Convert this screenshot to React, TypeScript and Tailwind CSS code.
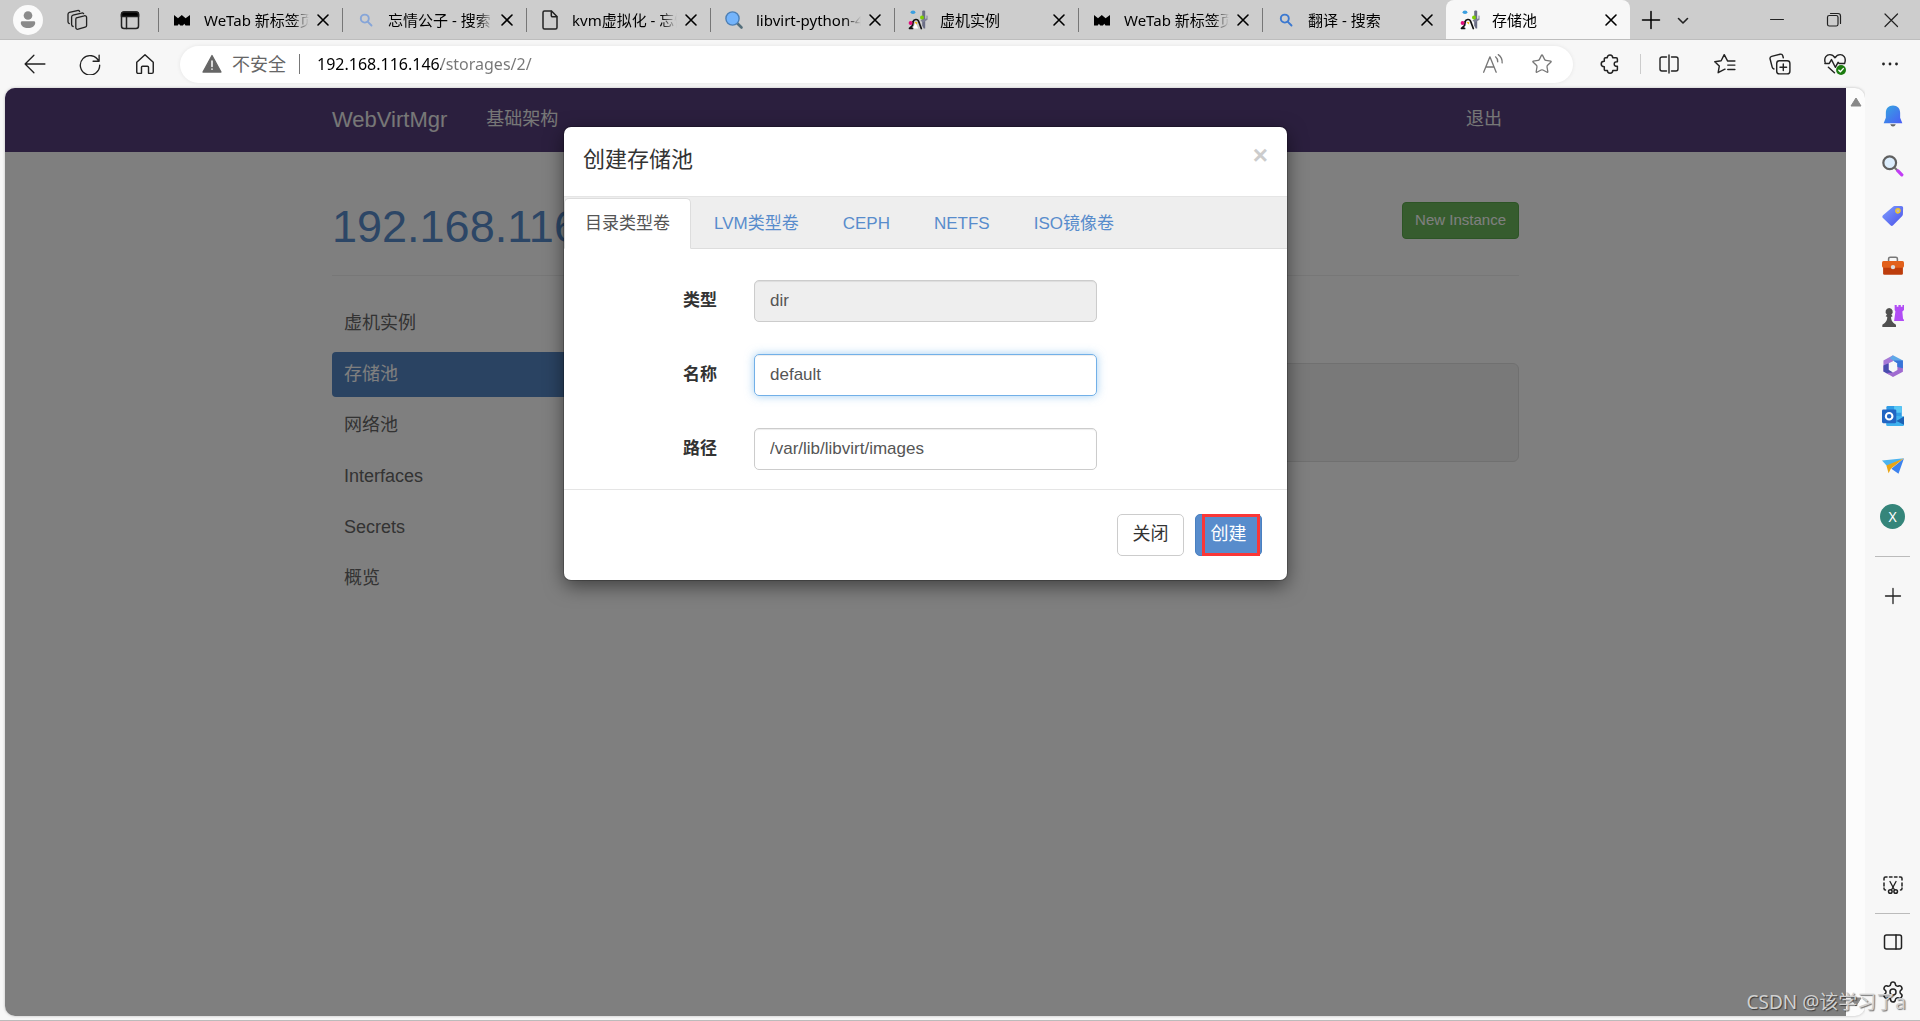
import { useState, type ReactNode } from "react";
import { Settings, Star } from "lucide-react";
import { clsx } from "clsx";

type Favicon = "wetab" | "search" | "searchFaded" | "file" | "glass" | "virt";

const tabs: { icon: Favicon; title: string }[] = [
  { icon: "wetab", title: "WeTab 新标签页" },
  { icon: "searchFaded", title: "忘情公子 - 搜索" },
  { icon: "file", title: "kvm虚拟化 - 忘情" },
  { icon: "glass", title: "libvirt-python-4" },
  { icon: "virt", title: "虚机实例" },
  { icon: "wetab", title: "WeTab 新标签页" },
  { icon: "search", title: "翻译 - 搜索" },
  { icon: "virt", title: "存储池" },
];

const menu = ["虚机实例", "存储池", "网络池", "Interfaces", "Secrets", "概览"];
const poolTypes = ["目录类型卷", "LVM类型卷", "CEPH", "NETFS", "ISO镜像卷"];

function Icon({ size = 20, width = 1.3, className, children }: { size?: number; width?: number; className?: string; children: ReactNode }) {
  return (
    <svg
      width={size}
      height={size}
      viewBox="0 0 20 20"
      fill="none"
      stroke="currentColor"
      strokeWidth={width}
      strokeLinecap="round"
      strokeLinejoin="round"
      className={clsx("shrink-0", className)}
      aria-hidden="true"
    >
      {children}
    </svg>
  );
}

function TabIcon({ name }: { name: Favicon }) {
  switch (name) {
    case "wetab":
      return (
        <Icon>
          <path d="M2 5l4 3.2L9.800 5l3.800 3.200L18 5v10.500h-4.500l-1.200-1.800-1.400 1.800H8.200l-1.300-1.800-1.200 1.800H2z" fill="#000" stroke="none" />
        </Icon>
      );
    case "search":
    case "searchFaded":
      return (
        <Icon width={1.9} className={name === "search" ? "text-[#3b78d0]" : "text-[#86a5d8]"}>
          <circle cx="8.8" cy="8.6" r="4" />
          <path d="M11.9 11.8l3.6 3.7" />
        </Icon>
      );
    case "file":
      return (
        <Icon width={1.5} className="text-[#222]">
          <path d="M4.5 1h7L17 6.500v11a1.500 1.500 0 0 1-1.500 1.500h-11A1.500 1.500 0 0 1 3 17.500v-15A1.500 1.500 0 0 1 4.500 1z" />
          <path d="M11.300 1.200V5.500a1.200 1.200 0 0 0 1.200 1.200h4.200" />
        </Icon>
      );
    case "glass":
      return (
        <Icon>
          <path d="M13.500 13.500l4 4" stroke="#546e7a" strokeWidth="2.600" />
          <circle cx="8.500" cy="8.500" r="6.600" fill="#74b4fb" stroke="#4c7fb5" strokeWidth="1.400" />
        </Icon>
      );
    case "virt":
      return (
        <Icon>
          <path d="M14.200 1.500c0-1.300 3-1.300 3 0v17h-1.500l-1.500-3z" fill="#6b6e85" stroke="none" />
          <path d="M12.500 10l6-1.500V5.500l1 .3v4l-5 3z" fill="#7d8097" stroke="none" />
          <ellipse cx="5" cy="2.200" rx="2.400" ry="1.700" fill="#3b9fe0" stroke="none" />
          <path d="M5.200 11.500c.7-2.300 4.300-2.800 5.300-.5l2.800 7.500" stroke="#111" strokeWidth="1.700" />
          <path d="M5.200 11.500l-.7 4-3 2.800h3.500" stroke="#111" strokeWidth="1.700" />
          <path d="M7.500 12.500l2.700 6H4.800z" fill="#fff" stroke="none" />
          <circle cx="14" cy="7.400" r="2" fill="#7fd000" stroke="none" />
          <circle cx="2.600" cy="13" r="2" fill="#e0107c" stroke="none" />
          <path d="M6.500 12l3 .2-1 2.300z" fill="#f5b800" stroke="none" />
        </Icon>
      );
  }
}

function BrowserTab({ icon, title, active }: { icon: Favicon; title: string; active: boolean }) {
  return (
    <div className={clsx("relative flex w-[184px] min-w-0 items-center", active && "rounded-t-lg bg-[#f7f7f7]")}>
      {!active && <span className="absolute top-2 left-0 h-6 w-px bg-[#777]" />}
      <button role="tab" aria-selected={active} className="flex h-full w-[151px] min-w-0 items-center gap-3 pl-[14px] text-left">
        <TabIcon name={icon} />
        <span className="min-w-0 flex-1 overflow-hidden whitespace-nowrap mask-r-from-85% text-[15px] leading-6 text-black">
          {title}
        </span>
      </button>
      <button aria-label="关闭标签页" className="ml-1">
        <Icon width={1.6} className="text-black">
          <path d="M5 5l10 10M15 5L5 15" />
        </Icon>
      </button>
    </div>
  );
}

function TabBar() {
  return (
    <header className="flex h-10 shrink-0 border-b border-[#bdbdbd] bg-[#cdcdcd]">
      <div className="flex w-[158px] shrink-0 items-center pl-[13px]">
        <button aria-label="个人资料" className="flex h-[30px] w-[30px] items-center justify-center rounded-full bg-[#fafafa]">
          <Icon size={18} className="text-[#8b8b8b]">
            <circle cx="10" cy="5" r="4.800" fill="currentColor" stroke="none" />
            <path d="M3.500 11.500h13a1.500 1.500 0 0 1 1.500 1.500c0 3.500-3.500 6-8 6s-8-2.500-8-6a1.500 1.500 0 0 1 1.500-1.500z" fill="currentColor" stroke="none" />
          </Icon>
        </button>
        <button aria-label="工作区" className="ml-[22px]">
          <Icon size={24} width={1.1} className="text-[#222]">
            <path d="M9.500 8.200l6.500-1.700a1.500 1.500 0 0 1 2 1.400v6.600c0 .7-.5 1.300-1.200 1.500l-5.800 1.700a1.500 1.500 0 0 1-2-1.400V9.800c0-.8 0-1.400.5-1.600z" />
            <path d="M6.800 15.400a1.600 1.600 0 0 1-1.300-1.600V7.600c0-.8.4-1.400 1.200-1.600l7-1.800c.7-.2 1.400 0 1.800.5" />
            <path d="M3.600 13a1.600 1.600 0 0 1-1.100-1.500V5.300c0-.8.4-1.400 1.200-1.600l6.500-1.600c.9-.2 1.700.1 2 .8" />
          </Icon>
        </button>
        <button aria-label="标签操作菜单" className="ml-[31px]">
          <Icon width={1.500} className="text-[#222]">
            <rect x="1.500" y="2" width="17" height="16.500" rx="2.500" />
            <path d="M1.500 6.500V4.500A2.500 2.500 0 0 1 4 2h12a2.500 2.500 0 0 1 2.500 2.500v2z" fill="#000" />
            <path d="M6.500 6.500v12" />
          </Icon>
        </button>
      </div>
      <div role="tablist" className="flex min-w-0">
        {tabs.map((tab, i) => (
          <BrowserTab key={i} icon={tab.icon} title={tab.title} active={i === tabs.length - 1} />
        ))}
      </div>
      <div className="flex flex-1 items-center">
        <button aria-label="新建标签页" className="ml-[11px]">
          <Icon width={1.500} className="text-black">
            <path d="M10 1.500v17M1.500 10h17" />
          </Icon>
        </button>
        <button aria-label="搜索标签页" className="ml-3">
          <Icon width={1.600} className="text-[#222]">
            <path d="M5.500 8.500l4.500 4.500 4.500-4.500" />
          </Icon>
        </button>
      </div>
      <div className="flex items-center gap-[37px] pr-[19px] text-[#222]">
        <button aria-label="最小化">
          <Icon width={1.200}>
            <path d="M3.500 9.500h13" strokeWidth="1" />
          </Icon>
        </button>
        <button aria-label="还原">
          <Icon width={1.200}>
            <rect x="3.500" y="5.500" width="10.500" height="10.500" rx="1.800" />
            <path d="M6.500 3.500h7.500a2.500 2.500 0 0 1 2.500 2.500v7.500" />
          </Icon>
        </button>
        <button aria-label="关闭">
          <Icon width={1.200}>
            <path d="M4 4l12.500 12.500M16.500 4L4 16.500" />
          </Icon>
        </button>
      </div>
    </header>
  );
}

function Toolbar() {
  return (
    <div className="flex h-12 shrink-0 items-center bg-[#f7f7f7] text-[#222]">
      <div className="flex w-[180px] shrink-0 items-center gap-[33px] pl-6">
        <button aria-label="后退">
          <Icon size={22} width={1.200}>
            <path d="M1 10h18M9 2L1 10l8 8" />
          </Icon>
        </button>
        <button aria-label="刷新">
          <Icon size={22} width={1.200}>
            <path d="M18 7.500A8.800 8.800 0 1 0 18.800 11M18.300 2v5.500h-5.500" />
          </Icon>
        </button>
        <button aria-label="主页">
          <Icon size={22} width={1.300}>
            <path d="M2.500 8.500L10 1.500l7.500 7v8.800c0 .7-.5 1.200-1.200 1.200h-3.100V13a1 1 0 0 0-1-1H7.800a1 1 0 0 0-1 1v5.500H3.700c-.7 0-1.200-.5-1.200-1.200z" />
          </Icon>
        </button>
      </div>
      <form className="flex h-[37px] min-w-0 flex-1 items-center rounded-full bg-white pr-5 pl-[22px] shadow-[0_0_4px_rgba(0,0,0,0.08)]">
        <Icon className="text-[#666]">
          <path d="M10 1.500L19 18H1z" fill="currentColor" />
          <path d="M10 7v5.500M10 15v.3" stroke="#fff" strokeWidth="1.500" />
        </Icon>
        <span className="ml-[10px] text-lg text-[#666]">不安全</span>
        <span className="mr-[17px] ml-[13px] h-5 w-px bg-[#777]" />
        <label htmlFor="address" className="sr-only">地址</label>
        <input
          id="address"
          defaultValue="192.168.116.146/storages/2/"
          className="min-w-0 flex-1 bg-[linear-gradient(90deg,#000_124px,#767676_124px)] bg-clip-text text-base text-transparent outline-none"
        />
        <button type="button" aria-label="朗读此页内容" className="mr-[27px] text-[#777]">
          <Icon size={22} width={1.200}>
            <path d="M1.500 17.500L7.200 3.500l5.700 14M3.500 12.700h7.400M12.300 3.500c1.500 1.200 2 2.600 2 4.500M14.800 1.500c2.600 1.900 3.700 4.500 3.500 7.500" />
          </Icon>
        </button>
        <button type="button" aria-label="收藏" className="text-[#777]">
          <Star size={22} strokeWidth={1.400} />
        </button>
      </form>
      <div className="flex w-[347px] shrink-0 items-center pl-[27px]">
        <button aria-label="扩展">
          <Icon width={1.500}>
            <path d="M5.500 3.800h1.800C7.300 2.200 8.300 1 10 1s2.700 1.200 2.700 2.800h3.500a1.200 1.200 0 0 1 1.200 1.200v2.700c-1.900-.2-3.200.7-3.200 2.300s1.300 2.500 3.200 2.300v3.100a1.200 1.200 0 0 1-1.200 1.200h-3.400c0 1.500-1 2.600-2.700 2.600s-2.700-1.100-2.700-2.600H5.500a1.200 1.200 0 0 1-1.200-1.200v-2.700C2.500 12.700 1.200 11.700 1.200 10s1.300-2.700 3.100-2.700V5a1.200 1.200 0 0 1 1.200-1.200z" />
          </Icon>
        </button>
        <span className="ml-5 h-5 w-px bg-[#ccc]" />
        <button aria-label="拆分屏幕" className="ml-[18px]">
          <Icon width={1.400}>
            <path d="M10 1v18M7.500 3H3a2 2 0 0 0-2 2v10a2 2 0 0 0 2 2h4.500M12.500 3H17a2 2 0 0 1 2 2v10a2 2 0 0 1-2 2h-4.500" />
          </Icon>
        </button>
        <button aria-label="收藏夹" className="ml-[35px]">
          <Icon size={22} width={1.300}>
            <path d="M12.300 7.200L9.300 1.500 6.500 7l-5.800.9 4.100 4-1 6 5.200-2.700 1-.5M12.300 7.200H19M12.500 11H19M12.500 15H19" />
          </Icon>
        </button>
        <button aria-label="集锦" className="ml-[33px]">
          <Icon size={22} width={1.300}>
            <rect x="7" y="7" width="12" height="12" rx="2.500" />
            <path d="M13 10v6M10 13h6M4.500 14.500a2 2 0 0 1-1.600-1.600L1 5.500a2 2 0 0 1 1.400-2.400l7.700-2a2 2 0 0 1 2.400 1.400l.5 1.800" />
          </Icon>
        </button>
        <button aria-label="浏览器概要" className="ml-[33px]">
          <Icon size={22} width={1.300}>
            <path d="M1 8.500C-.2 4 2.500 1.500 5.300 1.500c2 0 3.500 1 4.700 2.800 1.200-1.800 2.700-2.800 4.700-2.800C17.500 1.500 20.200 4 19 8.500M.8 9.500h4l2-3.500 3.500 7 2.500-4.500 1 1h5M4 13l5.500 5" />
            <circle cx="15.500" cy="15.500" r="4.500" fill="#1c7c10" stroke="none" />
            <path d="M13.500 15.600l1.400 1.400 2.600-2.800" stroke="#fff" />
          </Icon>
        </button>
        <button aria-label="设置及其他" className="ml-[34px]">
          <Icon>
            <path d="M3.500 10h.01M10 10h.01M16.500 10h.01" strokeWidth="2.800" />
          </Icon>
        </button>
      </div>
    </div>
  );
}

const sidebarApps: { label: string; drawing: ReactNode }[] = [
  {
    label: "通知",
    drawing: (
      <>
        <path d="M7.500 17.500h5l-.8 1.300c-.6 1-2.800 1-3.400 0z" fill="#666" stroke="none" />
        <path d="M10 .5c-4 0-6.500 2.700-6.500 6.500v4.500L1.500 16.500h17l-2-5V7C16.500 3.200 14 .5 10 .5z" fill="url(#bell)" stroke="none" />
      </>
    ),
  },
  {
    label: "搜索",
    drawing: (
      <>
        <path d="M12 12l2.500 2.500" stroke="#777" strokeWidth="2" />
        <path d="M14.500 14.500l3.500 3.500" stroke="#c23df5" strokeWidth="3" />
        <circle cx="7" cy="7" r="5.800" fill="#dcedfc" stroke="#606060" strokeWidth="2" />
      </>
    ),
  },
  {
    label: "购物",
    drawing: (
      <>
        <path d="M11.500 1l6-.2c1 0 1.700.7 1.700 1.700l-.2 6c0 .6-.2 1-.6 1.400l-8.300 8.600a1.700 1.700 0 0 1-2.400 0L.9 11.800a1.700 1.700 0 0 1 0-2.400L10 1.600c.4-.4.9-.6 1.500-.6z" fill="url(#tag)" stroke="none" />
        <circle cx="14.500" cy="5.300" r="1.900" fill="#b9b8c8" stroke="#f3c526" strokeWidth="1.300" />
      </>
    ),
  },
  {
    label: "工具",
    drawing: (
      <>
        <path d="M6 6V3.500C6 2.500 6.600 2 7.500 2h5c.9 0 1.500.5 1.500 1.500V6" stroke="#777" strokeWidth="1.400" />
        <rect x="1" y="10" width="18" height="8" rx="1.200" fill="#bd3d0c" stroke="none" />
        <rect x="0" y="5.500" width="20" height="6" rx="1.400" fill="#e2611c" stroke="none" />
        <circle cx="10" cy="11" r="2" fill="#ddd" stroke="none" />
      </>
    ),
  },
  {
    label: "游戏",
    drawing: (
      <>
        <path d="M11.500 0h1.900v1.500h1.500V0h2.200v1.500h1.500V0H20v4.500l-1.500 1.300.6 6.700c.5.300.9.800.9 2h-9l1.200-8.700-.7-1.300z" fill="#b14cf5" stroke="none" />
        <path d="M6.500 2.800a3.300 3.300 0 0 1 2 5.900l1.200 1.500-1.500.6c0 2.400.9 4.200 2.300 5.500l2.200 1.700v2H.3v-2l2.200-1.700c1.400-1.300 2.300-3.100 2.300-5.500l-1.500-.6 1.200-1.500a3.300 3.300 0 0 1 2-5.900z" fill="#505050" stroke="none" />
      </>
    ),
  },
  {
    label: "Microsoft 365",
    drawing: (
      <>
        <path d="M10 .3L1.300 5v10L6 17.500V7.500L10 5.600z" fill="#a778d6" stroke="none" />
        <path d="M10 .3L19 5v7.500l-5-3v-2L6.800 3z" fill="#5fa8e8" stroke="none" />
        <path d="M6 7.500v6L10 16l-4 1.500L1.300 15V9.500z" fill="#4a4dae" stroke="none" />
        <path d="M19 9v6.300l-9 4.700-6.200-3.600 6.200-.4 4-2.400V8z" fill="#a06bd0" stroke="none" />
        <path d="M19 5v7l-5-1V7.500L10 5z" fill="#3874d8" stroke="none" />
        <circle cx="10" cy="10.300" r="3.300" fill="#f7f7f7" stroke="none" />
      </>
    ),
  },
  {
    label: "Outlook",
    drawing: (
      <>
        <path d="M5 1h12a1 1 0 0 1 1 1v9H4V2a1 1 0 0 1 1-1z" fill="#2f9ce6" stroke="none" />
        <path d="M11 1h7v6h-7z" fill="#58c8f5" stroke="none" />
        <path d="M4 9l16 1.500V18a1.200 1.200 0 0 1-1.200 1.200H5A1.200 1.200 0 0 1 3.800 18z" fill="#3fb1ee" stroke="none" />
        <path d="M20 10.500V18l-7-3.500z" fill="#1d62b5" stroke="none" />
        <rect x="0" y="4" width="13" height="12.500" rx="1.200" fill="#2265c3" stroke="none" />
        <circle cx="6.500" cy="10.200" r="3" stroke="#fff" strokeWidth="1.900" />
      </>
    ),
  },
  {
    label: "Drop",
    drawing: (
      <>
        <path d="M0 5L20 3 5 10.500z" fill="#4cb4f0" stroke="none" />
        <path d="M20 3l-5 14-6.500-4.500z" fill="#3c82ee" stroke="none" />
        <path d="M4 9.500L20 3 8 12.500 6 16.500z" fill="#e9a516" stroke="none" />
      </>
    ),
  },
];

function Sidebar() {
  return (
    <aside className="flex w-[55px] shrink-0 flex-col items-center bg-[#f7f7f7] pt-[3px] text-[#222]">
      <svg width="0" height="0" className="absolute" aria-hidden="true">
        <linearGradient id="bell" x1="0" y1="0" x2="1" y2="1">
          <stop stopColor="#35a8e0" />
          <stop offset="1" stopColor="#4a5cf5" />
        </linearGradient>
        <linearGradient id="tag" x1="0" y1="0" x2="1" y2="1">
          <stop stopColor="#7fa0ff" />
          <stop offset="1" stopColor="#4a50e8" />
        </linearGradient>
      </svg>
      {sidebarApps.map(app => (
        <button key={app.label} aria-label={app.label} className="flex h-[50px] w-full items-center justify-center">
          <Icon size={22}>{app.drawing}</Icon>
        </button>
      ))}
      <button className="flex h-[50px] w-full items-center justify-center">
        <span className="h-[25px] w-[25px] rounded-full bg-[#35857a] text-center text-sm leading-[25px] text-white">X</span>
      </button>
      <span className="mt-[15px] h-px w-[35px] bg-[#bbb]" />
      <button aria-label="自定义" className="mt-[14px] flex h-[50px] w-full items-center justify-center">
        <Icon width={1.300}>
          <path d="M10 2.500v15M2.500 10h15" />
        </Icon>
      </button>
      <div className="mt-auto flex w-full flex-col items-center pb-[3px]">
        <button aria-label="屏幕截图" className="flex h-[50px] w-full items-center justify-center">
          <Icon width={1.500}>
            <path d="M1 5V3.500A1.500 1.500 0 0 1 2.500 2H4M6.500 2h2.500M11.500 2h2.500M16.500 2h1A1.500 1.500 0 0 1 19 3.500V5M1 8v3M19 8v3M1 13v.5A1.500 1.500 0 0 0 2.500 15M19 13v.5a1.500 1.500 0 0 1-1.500 1.500" />
            <path d="M7 6.500l4.500 8.500M13 6.500L8.500 15" strokeWidth="1.300" />
            <circle cx="7.300" cy="16.500" r="1.800" />
            <circle cx="12.700" cy="16.500" r="1.800" />
          </Icon>
        </button>
        <span className="my-[3px] h-px w-[35px] bg-[#bbb]" />
        <button aria-label="隐藏边栏" className="flex h-[50px] w-full items-center justify-center">
          <Icon width={1.500}>
            <rect x="1.500" y="3" width="17" height="14" rx="2" />
            <path d="M13 3v14" />
          </Icon>
        </button>
        <button aria-label="设置" className="flex h-[50px] w-full items-center justify-center">
          <Settings size={24} strokeWidth={1.500} />
        </button>
      </div>
    </aside>
  );
}

function HostPage() {
  return (
    <div className="h-full bg-white">
      <nav className="h-16 bg-[#563e7c]">
        <div className="mx-auto flex h-full max-w-[1187px] items-center pb-[2px] text-[#eee]">
          <a href="#" className="mr-[39px] text-[22px]">WebVirtMgr</a>
          <a href="#" className="text-lg">基础架构</a>
          <a href="#" className="mr-[17px] ml-auto text-lg">退出</a>
        </div>
      </nav>
      <main className="mx-auto max-w-[1187px]">
        <div className="flex h-[124px] items-start justify-between border-b border-[#eee] pt-[50px]">
          <h1 className="text-[45px] leading-[50px] text-[#588ccc]">192.168.116.146</h1>
          <button className="h-[37px] rounded-sm border border-[#5aa84c] bg-[#6cb85c] px-3 text-[15px] text-white">
            New Instance
          </button>
        </div>
        <div className="flex gap-[38px] pt-[25px]">
          <ul className="flex w-[270px] shrink-0 flex-col gap-[6px]">
            {menu.map(item => (
              <li key={item}>
                <a
                  href="#"
                  className={clsx(
                    "block h-[45px] rounded-sm px-3 text-lg leading-[45px]",
                    item === "存储池" ? "bg-[#5486c4] text-white" : "text-[#666]"
                  )}
                >
                  {item}
                </a>
              </li>
            ))}
          </ul>
          <div className="mt-[62px] h-[99px] flex-1 rounded-md border border-[#e0e0e0] bg-[#f2f2f2]" />
        </div>
      </main>
    </div>
  );
}

const fieldClass = "h-[42px] w-[343px] rounded-[5px] border px-[15px] text-[17px] text-[#555] outline-none";

function CreatePoolDialog() {
  const [name, setName] = useState("default");
  const [path, setPath] = useState("/var/lib/libvirt/images");

  return (
    <div
      role="dialog"
      aria-labelledby="pool-title"
      className="w-[723px] overflow-hidden rounded-[7px] bg-white text-[#333] shadow-[0_6px_19px_rgba(0,0,0,0.5),0_0_0_1px_rgba(0,0,0,0.2)]"
    >
      <div className="flex h-[70px] items-start justify-between border-b border-[#e5e5e5] pr-[19px] pl-[19px]">
        <h4 id="pool-title" className="pt-[17px] text-[22px] leading-8">创建存储池</h4>
        <button aria-label="关闭对话框" className="pt-3 text-[26px] leading-8 font-bold text-[#ccc]">×</button>
      </div>
      <ul className="flex h-[52px] items-end gap-[2px] border-b border-[#ddd] bg-[#eee]">
        {poolTypes.map((type, i) => (
          <li key={type} className="-mb-px">
            <a
              href="#"
              className={clsx(
                "block h-[51px] rounded-t-[5px] border px-5 text-[17px] leading-[49px]",
                i === 0 ? "border-[#ddd] border-b-white bg-white text-[#555]" : "border-transparent text-[#588ccc]"
              )}
            >
              {type}
            </a>
          </li>
        ))}
      </ul>
      <form>
        <div className="flex flex-col gap-8 pt-[31px] pb-[19px]">
          <div className="flex items-center gap-[37px]">
            <label htmlFor="pool-type" className="w-[153px] text-right text-[17px] font-bold">类型</label>
            <input id="pool-type" disabled value="dir" className={clsx(fieldClass, "border-[#ccc] bg-[#eee] shadow-[inset_0_1px_1px_rgba(0,0,0,0.075)]")} />
          </div>
          <div className="flex items-center gap-[37px]">
            <label htmlFor="pool-name" className="w-[153px] text-right text-[17px] font-bold">名称</label>
            <input
              id="pool-name"
              value={name}
              onChange={e => setName(e.target.value)}
              className={clsx(fieldClass, "border-[#72b0e8] shadow-[inset_0_1px_1px_rgba(0,0,0,0.075),0_0_10px_rgba(102,175,233,0.6)]")}
            />
          </div>
          <div className="flex items-center gap-[37px]">
            <label htmlFor="pool-path" className="w-[153px] text-right text-[17px] font-bold">路径</label>
            <input
              id="pool-path"
              value={path}
              onChange={e => setPath(e.target.value)}
              className={clsx(fieldClass, "border-[#ccc] shadow-[inset_0_1px_1px_rgba(0,0,0,0.075)]")}
            />
          </div>
        </div>
        <div className="flex justify-end gap-[11px] border-t border-[#e5e5e5] px-[25px] py-6">
          <button type="button" className="h-[42px] w-[67px] rounded-[5px] border border-[#ccc] bg-white pb-[2px] text-lg">关闭</button>
          <button type="button" className="relative h-[42px] w-[67px] rounded-[5px] border border-[#4a80c0] bg-[#588ccc] pb-[2px] text-lg text-white">
            创建
            <span className="absolute -inset-y-px right-px left-[6px] border-3 border-[#fa3737]" />
          </button>
        </div>
      </form>
    </div>
  );
}

export default function App() {
  return (
    <div className="relative flex h-screen flex-col overflow-hidden border-b border-[#bbb] bg-[#f7f7f7] font-['Noto_Sans','Noto_Sans_CJK_SC',sans-serif]">
      <TabBar />
      <Toolbar />
      <div className="flex min-h-0 flex-1">
        <div className="mb-1 ml-[5px] flex min-w-0 flex-1 overflow-hidden rounded-[10px] bg-[#fcfcfc] shadow-[0_0_3px_rgba(0,0,0,0.25)]">
          <div className="relative min-w-0 flex-1 font-['Liberation_Sans','Noto_Sans_CJK_SC',sans-serif]">
            <HostPage />
            <div className="absolute inset-0 flex items-start justify-center bg-black/50 pt-[39px]">
              <CreatePoolDialog />
            </div>
          </div>
          <div className="flex w-[19px] shrink-0 flex-col items-center justify-between py-[9px] text-[#888]">
            <svg width="12" height="10" viewBox="0 0 12 10" aria-hidden="true">
              <path d="M6 1l5 8H1z" fill="currentColor" stroke="currentColor" strokeLinejoin="round" />
            </svg>
            <svg width="12" height="10" viewBox="0 0 12 10" aria-hidden="true">
              <path d="M6 9L1 1h10z" fill="currentColor" stroke="currentColor" strokeLinejoin="round" />
            </svg>
          </div>
        </div>
        <Sidebar />
      </div>
      <p className="absolute right-[14px] bottom-1 text-[19px] leading-7 text-[#d0d0d0] [text-shadow:1px_1px_1px_rgba(0,0,0,0.55)]">
        CSDN @该学习了a
      </p>
    </div>
  );
}
